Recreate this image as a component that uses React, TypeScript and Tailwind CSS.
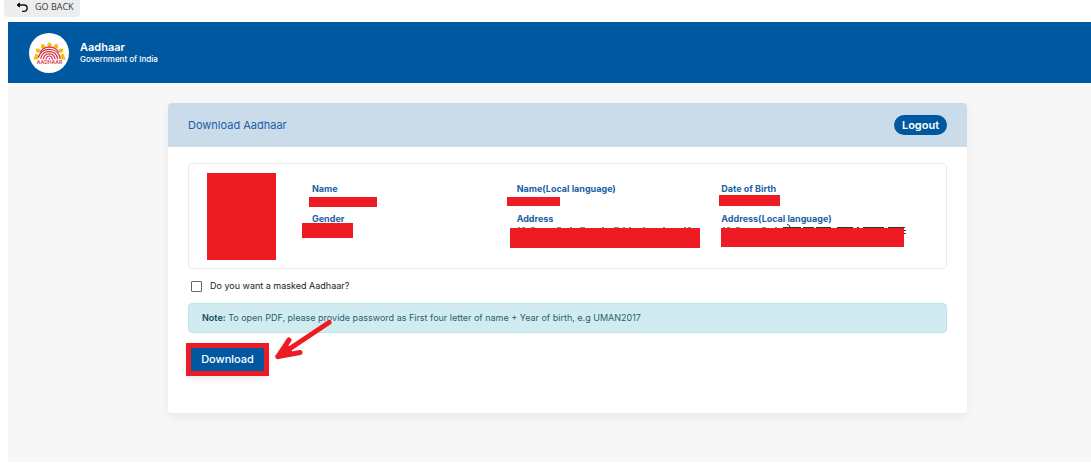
import type { ReactNode } from "react";

interface FieldProps {
  label: string;
  mask: string;
  children?: ReactNode;
}

function AadhaarLogo() {
  return (
    <svg viewBox="0 0 40 40" className="size-10 shrink-0" role="img" aria-label="Aadhaar logo">
      <circle cx="20" cy="20" r="20" fill="#fff" />
      <g fill="#f9b916">
        <path d="M20.500 9l2.300 2.600-.8 2.400h-3l-.8-2.400zM12.400 11l3.200.6.8 2.400-2.600 1.800-2-1.400zM28.600 11l-3.200.6-.8 2.400 2.600 1.800 2-1.400zM6.600 15.800l3.400-.4 1.400 2-1.400 2.600-2.600-.8zM34.400 15.800l-3.400-.4-1.400 2 1.400 2.600 2.600-.8zM6.400 20.800l2.600.6.8 2.200-.8 2.600-4.600.6zM34.600 20.800l-2.600.6-.8 2.200.8 2.600 4.600.6z" />
      </g>
      <g fill="none" stroke="#d6304a" strokeWidth="1.2">
        <path d="M11 19.600c1.800-3.500 5.200-5.400 9.400-5.400 4.400 0 7.800 2 9.400 5.400" />
        <path d="M9.400 24.600c1.400-5 5.400-8.200 10.800-8.200 6 0 10.200 3.800 11 9.600" />
        <path d="M11.600 26c.8-4.500 4-7.400 8.400-7.400 5 0 8.200 3 8.600 7.600" />
        <path d="M14.200 26.400c.6-3.500 2.700-5.600 5.800-5.600 3.600 0 5.800 2.200 6.100 5.600" />
        <path d="M17 26.600c.3-2.300 1.400-3.600 3.200-3.600 2 0 3.100 1.400 3.300 3.600" />
        <path d="M20.400 25v1.600" />
      </g>
      <text x="20.500" y="30.500" textAnchor="middle" fill="#d6304a" fontFamily="Inter, sans-serif" fontSize="5" fontWeight="600">
        AADHAAR
      </text>
    </svg>
  );
}

function Field({ label, mask, children }: FieldProps) {
  return (
    <div className="relative h-[30px]">
      <dt className="text-[9px] leading-3 font-bold text-[#1a5fa5]">{label}</dt>
      <dd>
        {children}
        <span className={`absolute bg-[#ed1c24] ${mask}`} />
      </dd>
    </div>
  );
}

export default function App() {
  return (
    <div className="bg-white pb-3 font-['Inter',sans-serif]">
      <div className="flex px-1">
        <button type="button" className="flex h-[17px] w-[76px] items-center gap-[7px] rounded-b-sm bg-[#ededed] pb-[3px] pl-3 font-['Open_Sans',sans-serif] text-[9px] text-[#2f3b4a]">
          <svg viewBox="0 0 12 11" className="h-[11px] w-3" fill="none" stroke="#111" strokeWidth="1.4" aria-hidden="true">
            <path d="M1 3h7a3 3 0 0 1 0 6.400H6" />
            <path d="M3.500 1L1 3l2.500 2z" fill="#111" strokeWidth="1" />
          </svg>
          GO BACK
        </button>
      </div>

      <div className="mt-[5px] ml-2 bg-[#f7f7f7]">
        <header className="flex h-[61px] items-center gap-[11px] bg-[#0059a0] pl-[21px] text-white">
          <AadhaarLogo />
          <div>
            <p className="text-[11px] leading-3 font-semibold">Aadhaar</p>
            <p className="text-[8px] leading-3 font-medium">Government of India</p>
          </div>
        </header>

        <main className="pt-5 pr-31 pb-[49px] pl-40">
          <section className="rounded-sm bg-white shadow-[0_4px_10px_rgba(0,0,0,0.06)]">
            <div className="flex h-11 items-center justify-between rounded-t-sm bg-[#cadcea] px-5">
              <h1 className="text-[11px] leading-4 text-[#1a5fa5]">Download Aadhaar</h1>
              <button type="button" className="h-5 w-[53px] rounded-full bg-[#0059a0] text-[11px] leading-5 font-semibold text-white">
                Logout
              </button>
            </div>

            <div className="px-5 pt-4 pb-[39px]">
              <div className="flex gap-9 rounded-sm border border-[#ececec] pt-[9px] pr-5 pb-2 pl-[18px]">
                <div className="h-[87px] w-[69px] shrink-0 bg-[#ed1c24]" />
                <dl className="grid flex-1 grid-cols-3 content-start pt-[10px]">
                  <Field label="Name" mask="top-[14px] -left-[3px] h-[10px] w-[68px]" />
                  <Field label="Name(Local language)" mask="top-[14px] -left-[10px] h-[9px] w-[53px]" />
                  <Field label="Date of Birth" mask="top-3 -left-[2px] h-[11px] w-[61px]" />
                  <Field label="Gender" mask="top-[10px] -left-[10px] h-[15px] w-[51px]" />
                  <Field label="Address" mask="top-[15px] -left-[7px] h-5 w-[190px]">
                    <svg viewBox="0 0 190 2" className="absolute top-[14px] -left-[7px] h-[2px] w-[190px]" aria-hidden="true">
                      <path d="M8 .5h2m2 0h3m6 0h4m22 0h4m9 0h2m8 0h5m17 0h2m10 0h5m4 0h2m4 0h2m12 0h2m18 0h2m19 0h2m2 0h3" stroke="#8a8a8a" />
                    </svg>
                  </Field>
                  <Field label="Address(Local language)" mask="top-[15px] left-0 h-[19px] w-[183px]">
                    <svg viewBox="0 0 186 10" className="absolute top-[11px] left-0 h-[10px] w-[186px]" fill="none" stroke="#333" aria-hidden="true">
                      <path d="M2 3.500h2m2 0h3m6 0h4m22 0h4m9 0h2" stroke="#8a8a8a" />
                      <path d="M62 3.500h18m2 0h11m2 0h15m6 0h16m4 0h2m4 0h21m4 0h17" />
                      <path d="M66 .5q3 0 3 3M183 6.500h2M183 9.500h2" />
                    </svg>
                  </Field>
                </dl>
              </div>

              <label className="mt-[10px] flex h-[14px] items-center gap-2 pl-[3px] text-[9px] text-[#222]">
                <input type="checkbox" className="size-[11px] appearance-none rounded-[1px] border border-[#666] bg-white checked:bg-[#0059a0]" />
                Do you want a masked Aadhaar?
              </label>

              <p className="mt-[10px] rounded-sm border border-[#bee5e7] bg-[#d1ecf0] px-[13px] text-[9px] leading-7 text-[#2c5f6b]">
                <strong className="font-semibold text-[#0f4c5c]">Note:</strong> To open PDF, please provide password as First four letter of name + Year of birth, e.g UMAN2017
              </p>

              <div className="relative mt-3 flex">
                <button type="button" className="relative h-[29px] w-[79px] bg-[#0059a0] text-[11px] font-medium text-white shadow-[0_4px_8px_rgba(0,0,0,0.1)]">
                  Download
                  <span className="absolute -inset-[2px] border-[5px] border-[#ed1c24]" />
                </button>
                <svg viewBox="0 0 60 44" className="absolute -top-[27px] left-[85px] h-11 w-[60px]" fill="none" stroke="#ed1c24" strokeWidth="5" strokeLinecap="round" strokeLinejoin="round" aria-hidden="true">
                  <path d="M56 4.500L5 38.500" />
                  <path d="M16 22L5 38.500l22-4" />
                  <path d="M14 27L7 37l11-4z" fill="#ed1c24" strokeWidth="2" />
                </svg>
              </div>
            </div>
          </section>
        </main>
      </div>
    </div>
  );
}
